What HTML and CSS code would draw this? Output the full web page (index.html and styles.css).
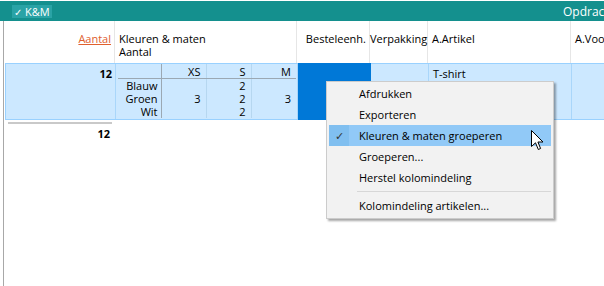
FILE: index.html
```html
<!DOCTYPE html>
<html lang="nl">
<head>
    <meta charset="UTF-8">
    <title>K&amp;M</title>
    <link rel="stylesheet" href="styles.css">
</head>
<body>
    <div class="app">
        <div class="topbar">
            <span class="tab"><span class="tab-check">&#10003;</span>K&amp;M</span>
            <span class="title">Opdrachten</span>
        </div>

        <div class="grid">
            <div class="row head">
                <div class="cell num"><span class="sorted">Aantal</span></div>
                <div class="cell">Kleuren &amp; maten<br>Aantal</div>
                <div class="cell num">Besteleenh.</div>
                <div class="cell num">Verpakking</div>
                <div class="cell">A.Artikel</div>
                <div class="cell">A.Voorraad</div>
            </div>

            <div class="row data">
                <div class="cell num bold">12</div>
                <div class="cell matrix-cell">
                    <table class="matrix">
                        <tr class="matrix-head">
                            <th class="label"></th>
                            <th>XS</th>
                            <th>S</th>
                            <th>M</th>
                        </tr>
                        <tr>
                            <td class="label">Blauw</td>
                            <td></td>
                            <td>2</td>
                            <td></td>
                        </tr>
                        <tr>
                            <td class="label">Groen</td>
                            <td>3</td>
                            <td>2</td>
                            <td>3</td>
                        </tr>
                        <tr>
                            <td class="label">Wit</td>
                            <td></td>
                            <td>2</td>
                            <td></td>
                        </tr>
                    </table>
                </div>
                <div class="cell selected"></div>
                <div class="cell"></div>
                <div class="cell">T-shirt</div>
                <div class="cell"></div>
            </div>

            <div class="total">
                <div class="total-cell bold">12</div>
            </div>
        </div>

        <div class="menu">
            <div class="menu-item">Afdrukken</div>
            <div class="menu-item">Exporteren</div>
            <div class="menu-item checked"><span class="check">&#10003;</span>Kleuren &amp; maten groeperen</div>
            <div class="menu-item">Groeperen...</div>
            <div class="menu-item">Herstel kolomindeling</div>
            <div class="menu-sep"></div>
            <div class="menu-item">Kolomindeling artikelen...</div>
        </div>

        <svg class="cursor" width="14" height="22" viewBox="0 0 14 22">
            <path d="M0.5 0.5 L0.5 16.5 L4.5 12.8 L7.3 19.5 L9.6 18.5 L6.9 12 L12 12 Z" fill="#fff" stroke="#000" stroke-width="1"/>
        </svg>
    </div>
</body>
</html>
```

FILE: styles.css
```css
* {
    margin: 0;
    padding: 0;
    box-sizing: border-box;
}

body {
    font-family: "Open Sans", "Noto Sans", sans-serif;
    font-size: 11px;
    color: #000;
    background: #fff;
    width: 604px;
    height: 286px;
    overflow: hidden;
}

.app {
    position: relative;
    height: 286px;
}

/* top bar */
.topbar {
    margin-top: 1px;
    height: 20px;
    background: #14908e;
    display: flex;
    align-items: center;
    color: #fff;
}

.tab {
    margin-left: 12px;
    padding: 0 2px;
    height: 13px;
    line-height: 13px;
    background: #2aa3a6;
    font-size: 11px;
}

.tab-check {
    font-size: 10px;
    margin-right: 3px;
}

.title {
    margin-left: auto;
    width: 41px;
    overflow: hidden;
    white-space: nowrap;
    font-size: 12px;
}

/* grid */
.grid {
    margin-left: 3px;
    border-left: 1px solid #a8a8a8;
    height: 265px;
    width: 720px;
}

.row {
    display: grid;
    grid-template-columns: 111px 182px 73px 58px 143px 150px;
}

.cell {
    border-right: 1px solid #e6e6e6;
    padding: 0 4px;
    line-height: 13px;
    white-space: nowrap;
}

.head {
    height: 42px;
}

.head .cell {
    padding-top: 11px;
}

.num {
    text-align: right;
}

.row .num {
    padding-right: 3px;
    padding-left: 0;
}

.sorted {
    color: #e0602e;
    text-decoration: underline;
}

.bold {
    font-weight: bold;
}

.data {
    height: 57px;
    margin-left: 1px;
    grid-template-columns: 110px 182px 73px 58px 143px 150px;
    background: #cce8ff;
    border: 1px solid #99d1ff;
    border-right: none;
}

.data .cell {
    border-right-color: #a9d6fa;
    padding-top: 3px;
}

.data .selected {
    background: #0078d7;
    border-right: none;
    margin-top: -1px;
    margin-bottom: -1px;
}

.data .matrix-cell {
    padding: 0 0 0 2px;
}

/* colour / size matrix */
.matrix {
    border-collapse: collapse;
    width: 178px;
}

.matrix th,
.matrix td {
    font-weight: normal;
    text-align: right;
    padding: 0 5px 0 0;
    height: 13px;
    line-height: 13px;
    border-right: 1px solid #b6d7f0;
    width: 45px;
}

.matrix td:last-child,
.matrix th:last-child {
    border-right: none;
}

.matrix .label {
    width: 43px;
    padding-right: 3px;
    border-right: 1px solid #9ba8b3;
}

.matrix-head th {
    height: 14px;
    padding-top: 1px;
    border-bottom: 1px solid #9ba8b3;
}

/* total */
.total {
    padding: 2px 0 0 4px;
}

.total-cell {
    width: 104px;
    border-top: 2px solid #c9c9c9;
    text-align: right;
    padding: 3px 2px 0 0;
    line-height: 13px;
}

/* context menu */
.menu {
    position: absolute;
    left: 326px;
    top: 80px;
    width: 228px;
    height: 138px;
    padding: 1px 2px 2px;
    background: #f2f2f2;
    border: 1px solid #cccccc;
    box-shadow: 2px 2px 2px rgba(0, 0, 0, 0.35);
    font-size: 11px;
}

.menu-item {
    position: relative;
    height: 21px;
    line-height: 21px;
    padding-left: 30px;
    white-space: nowrap;
}

.menu-item.checked {
    background: #91c9f7;
}

.check {
    position: absolute;
    left: 0;
    top: 0;
    width: 20px;
    height: 21px;
    background: #80bff0;
    text-align: center;
    color: #333;
}

.menu-sep {
    height: 7px;
    margin-left: 28px;
    background: linear-gradient(#d7d7d7, #d7d7d7) no-repeat 0 3px / 100% 1px;
}

.cursor {
    position: absolute;
    left: 531px;
    top: 129px;
}
```
